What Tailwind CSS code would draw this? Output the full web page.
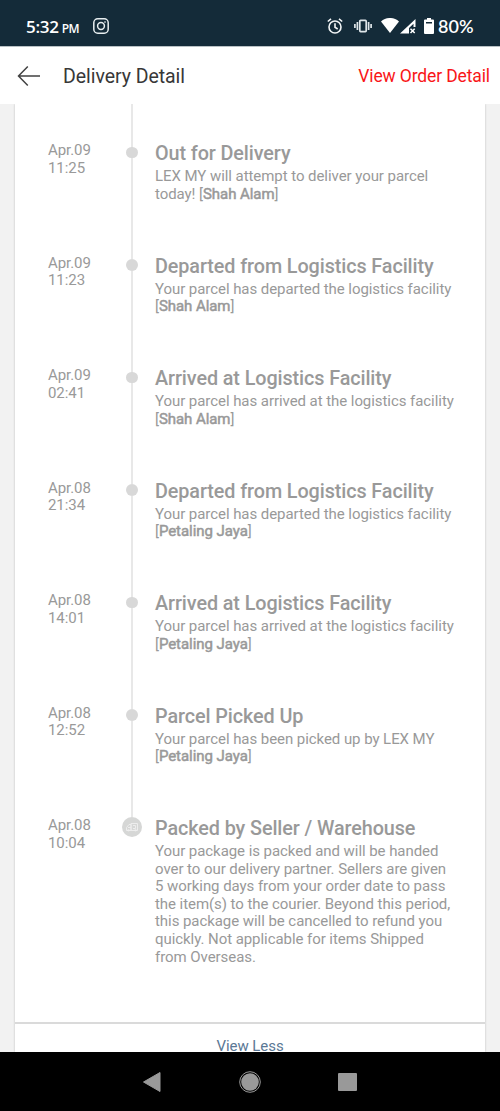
<!DOCTYPE html>
<html lang="en">
<head>
<meta charset="utf-8">
<title>Delivery Detail</title>
<script src="https://cdn.jsdelivr.net/npm/@tailwindcss/browser@4"></script>
</head>
<body class="w-[500px] h-[1111px] overflow-hidden bg-white font-[Roboto,sans-serif]">
<div class="flex flex-col h-[1111px]">
  <div class="h-[46px] shrink-0 bg-[#142b39] flex items-start text-white pt-[15px] pl-[26px] font-['Open_Sans',sans-serif]">
    <div class="w-[67px] shrink-0 flex items-baseline gap-[3px] leading-6 font-semibold whitespace-nowrap"><span class="text-[17px] tracking-[-0.3px]">5:32</span><span class="text-[12px] tracking-[-0.6px]">PM</span></div>
    <svg class="mt-[3px] w-4 h-4 shrink-0" viewBox="0 0 16 16" fill="none" stroke="#e8eef0" stroke-width="1.5"><rect x=".8" y=".8" width="14.4" height="14.4" rx="4"/><circle cx="8" cy="8" r="3.4"/><circle cx="12" cy="4" r=".5" fill="#fff" stroke-width=".6"/></svg>
    <svg class="ml-[218px] mt-[3px] w-4 h-4 shrink-0" viewBox="0 0 16 16" fill="none" stroke="#f2f5f6" stroke-width="1.6"><circle cx="8" cy="9" r="6"/><path d="M8 5.3v4l2.7 1.7M.8 3.5 4 .9M15.2 3.5 12 .9"/></svg>
    <svg class="ml-[11px] mt-[4px] w-[18px] h-[14px] shrink-0" viewBox="0 0 18 14" fill="none" stroke="#dfe6e9" stroke-width="1.7"><rect x="5.8" y="1.4" width="6.4" height="11.2" rx=".8"/><path d="M3.4 3v8M14.6 3v8M.9 5v4M17.1 5v4"/></svg>
    <svg class="ml-[9px] mt-[3px] w-[18px] h-[15px] shrink-0" viewBox="0 0 18 15" fill="#fff"><path d="M0 3.5C5-1.2 13-1.2 18 3.5L9 15z"/></svg>
    <svg class="ml-[1px] mt-[4px] w-[16px] h-[15px] shrink-0" viewBox="0 0 16 15"><path d="M0 14.5 15.5 0v8h-2V4.7L9 9v5.5z" fill="#fff"/><path d="m10.5 9.8 4.2 4.2m0-4.2L10.500 14" stroke="#fff" stroke-width="1.5"/></svg>
    <svg class="ml-[8px] mt-[3px] w-[10px] h-4 shrink-0" viewBox="0 0 10 16" fill="#fff"><path d="M3 0h4v1.500h2q1 0 1 1V15q0 1-1 1H1q-1 0-1-1V2.500q0-1 1-1h2zM2 4v1.500h6V4z" fill-rule="evenodd"/></svg>
    <span class="ml-[4px] -mt-px text-[18px] leading-6 font-semibold font-[Lato,sans-serif]">80%</span>
  </div>
  <div class="h-[58px] shrink-0 bg-white border-t border-[#b9c1c5] flex items-center justify-between pl-[17px] pr-[10px]">
    <div class="flex items-center">
      <svg class="w-6 h-[22px]" viewBox="0 0 24 22" fill="none" stroke="#424242" stroke-width="1.500"><path d="M10.800 1.500 1.500 11l9.300 9.500M1.500 11H23"/></svg>
      <span class="ml-[22px] pt-[3px] text-[19.500px] leading-6 tracking-[-0.050px] text-[#383838]">Delivery Detail</span>
    </div>
    <span class="pt-[1px] text-[17.500px] tracking-[-0.130px] leading-6 text-[#f91618]">View Order Detail</span>
  </div>
  <div class="h-[948px] shrink-0 bg-[#f2f2f2] px-[15px] overflow-hidden">
    <div class="bg-white h-full shadow-[0_0_2px_#bbb] text-[#999] text-[15px] tracking-[-0.060px] leading-[17.600px]">
      <div class="h-[920px] border-b-2 border-[#dadada] flex flex-col">
        <div class="h-[36px] shrink-0 flex"><div class="ml-[116px] w-[2px] bg-[#e8e8e8]"></div></div>
        <div id="rows"></div>
      </div>
      <div class="text-center text-[#5b7895] leading-[18px] pt-[12.500px]">View Less</div>
    </div>
  </div>
  <div class="flex-1 bg-black flex items-center pl-[142px]">
    <svg class="w-[19px] h-[20px]" viewBox="0 0 19 20" fill="#999"><path d="M18 0.500V19.500L1.500 10z" stroke="#999" stroke-linejoin="round"/></svg>
    <svg class="ml-[78px] w-[22px] h-[22px]" viewBox="0 0 22 22"><circle cx="11" cy="11" r="10.300" fill="none" stroke="#999"/><circle cx="11" cy="11" r="8.800" fill="#999"/></svg>
    <div class="ml-[77px] w-[19px] h-[18px] rounded-[1px] bg-[#999]"></div>
  </div>
</div>
<template id="row">
  <div class="h-[112.500px] flex">
    <div class="w-[107px] shrink-0 pl-[33px] pt-[2px]"><div data-d></div><div data-t></div></div>
    <div class="w-5 shrink-0 flex flex-col items-center"><div class="h-[6.500px] w-[2px] bg-[#e8e8e8]"></div><div class="size-[11.500px] shrink-0 rounded-full bg-[#d8d8d8]"></div><div class="flex-1 w-[2px] bg-[#e8e8e8]"></div></div>
    <div class="pl-[13px] whitespace-nowrap"><div data-h class="text-[19.800px] tracking-[-0.090px] leading-[24px] pt-[2px] font-medium"></div><div data-b class="pt-[2px]"></div><div>[<span data-p class="[-webkit-text-stroke:0.500px_#999]"></span>]</div></div>
  </div>
</template>
<template id="last">
  <div class="flex">
    <div class="w-[107px] shrink-0 pl-[33px] pt-[2px]">Apr.08<br>10:04</div>
    <div class="w-5 shrink-0 flex flex-col items-center"><div class="h-[2px] w-[2px] bg-[#e8e8e8]"></div>
      <svg class="w-5 h-5" viewBox="0 0 20 20" fill="none"><circle cx="10" cy="10" r="10" fill="#d6d7d6"/><path d="M9 6.500h6.500v7H9zM4.500 13.500v-3L7 7.500h2v6zM6 10.500h3M11 8.500h2.500v3H11" stroke="#ededed"/><circle cx="6.500" cy="13.300" r="1.100" fill="#eee"/><circle cx="13.500" cy="13.300" r="1.100" fill="#eee"/></svg>
    </div>
    <div class="pl-[13px] whitespace-nowrap"><div class="text-[19.800px] tracking-[-0.090px] leading-[24px] pt-[2px] font-medium">Packed by Seller / Warehouse</div><div class="pt-[2px]">Your package is packed and will be handed<br>over to our delivery partner. Sellers are given<br>5 working days from your order date to pass<br>the item(s) to the courier. Beyond this period,<br>this package will be cancelled to refund you<br>quickly. Not applicable for items Shipped<br>from Overseas.</div></div>
  </div>
</template>
<script>
const events = [
  ["Apr.09","11:25","Out for Delivery","LEX MY will attempt to deliver your parcel","Shah Alam","today! "],
  ["Apr.09","11:23","Departed from Logistics Facility","Your parcel has departed the logistics facility","Shah Alam"],
  ["Apr.09","02:41","Arrived at Logistics Facility","Your parcel has arrived at the logistics facility","Shah Alam"],
  ["Apr.08","21:34","Departed from Logistics Facility","Your parcel has departed the logistics facility","Petaling Jaya"],
  ["Apr.08","14:01","Arrived at Logistics Facility","Your parcel has arrived at the logistics facility","Petaling Jaya"],
  ["Apr.08","12:52","Parcel Picked Up","Your parcel has been picked up by LEX MY","Petaling Jaya"]
];
const rows = document.getElementById("rows");
for (const e of events) {
  const n = document.getElementById("row").content.cloneNode(true);
  ["d","t","h","b","p"].forEach((k, i) => n.querySelector(`[data-${k}]`).textContent = e[i]);
  if (e[5]) n.querySelector("[data-p]").parentNode.prepend(e[5]);
  rows.append(n);
}
rows.append(document.getElementById("last").content.cloneNode(true));
</script>
</body>
</html>
